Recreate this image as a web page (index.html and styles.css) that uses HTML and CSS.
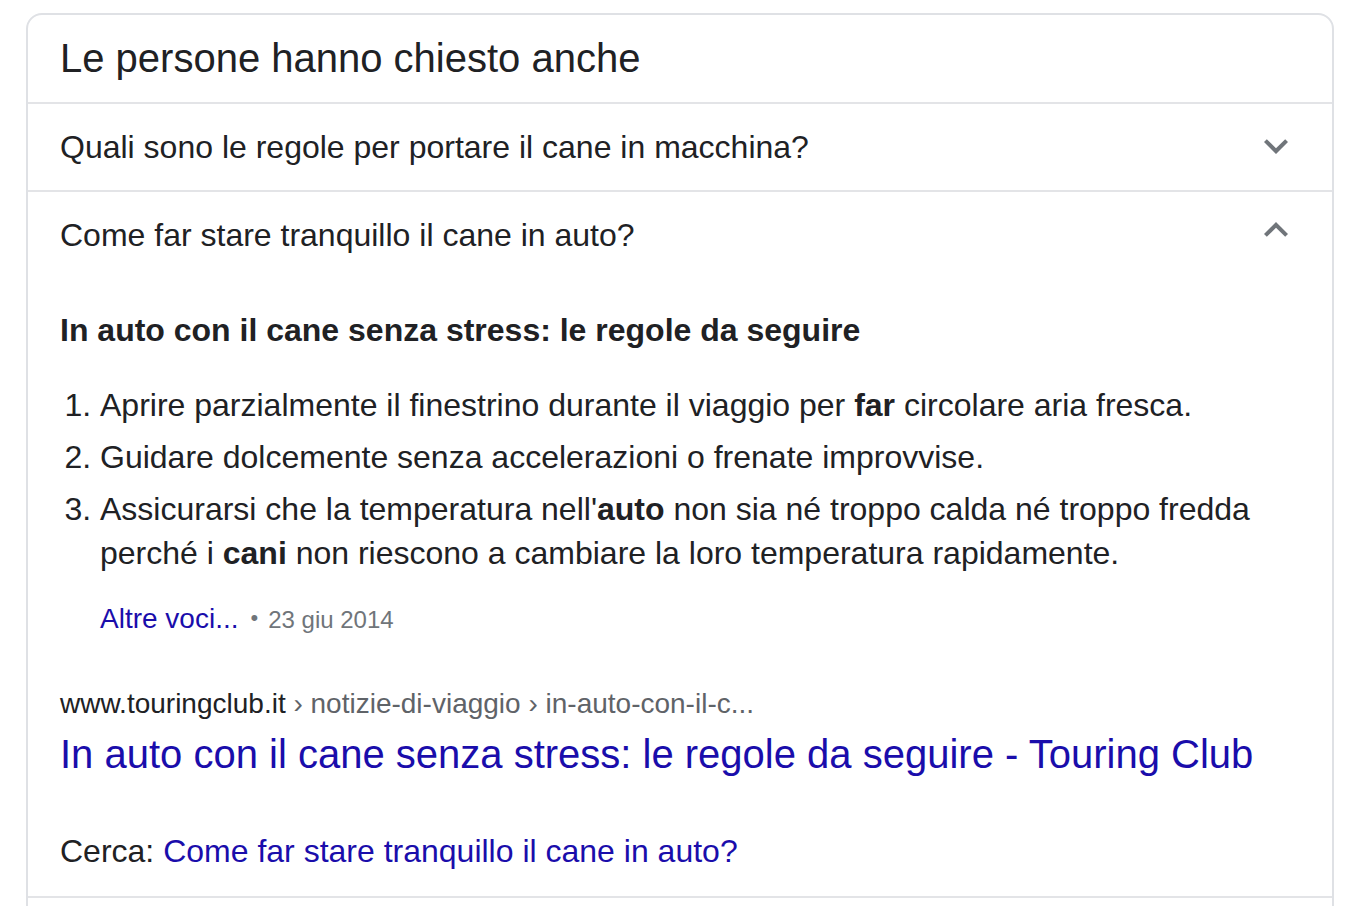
FILE: index.html
```html
<!DOCTYPE html>
<html lang="it">
<head>
<meta charset="utf-8">
<title>Le persone hanno chiesto anche</title>
<link rel="stylesheet" href="styles.css">
</head>
<body>
<div class="card">
  <div class="card-head">Le persone hanno chiesto anche</div>

  <div class="q-row">
    <div class="q-text">Quali sono le regole per portare il cane in macchina?</div>
    <svg class="chev chev-down" viewBox="0 0 24 24" width="48" height="48" aria-hidden="true"><path d="M16.59 8.59L12 13.17 7.41 8.59 6 10l6 6 6-6z"/></svg>
  </div>

  <div class="q-row q-open">
    <div class="q-main">
      <div class="q-text">Come far stare tranquillo il cane in auto?</div>
      <div class="answer">
        <div class="ans-title">In auto con il cane senza stress: le regole da seguire</div>
        <ol class="ans-list">
          <li>Aprire parzialmente il finestrino durante il viaggio per <b>far</b> circolare aria fresca.</li>
          <li>Guidare dolcemente senza accelerazioni o frenate improvvise.</li>
          <li>Assicurarsi che la temperatura nell'<b>auto</b> non sia né troppo calda né troppo fredda perché i <b>cani</b> non riescono a cambiare la loro temperatura rapidamente.</li>
        </ol>
        <div class="more"><a href="#" class="link">Altre voci...</a><span class="dot">•</span><span class="date">23 giu 2014</span></div>
        <div class="crumb"><span class="host">www.touringclub.it</span> › notizie-di-viaggio › in-auto-con-il-c...</div>
        <a href="#" class="link res-title">In auto con il cane senza stress: le regole da seguire - Touring Club</a>
        <div class="search">Cerca: <a href="#" class="link">Come far stare tranquillo il cane in auto?</a></div>
      </div>
    </div>
    <svg class="chev chev-up" viewBox="0 0 24 24" width="48" height="48" aria-hidden="true"><path d="M12 8l-6 6 1.41 1.41L12 10.83l4.59 4.58L18 14z"/></svg>
  </div>

  <div class="q-row q-next"></div>
</div>
</body>
</html>
```

FILE: styles.css
```css
* { box-sizing: border-box; }
html, body { margin: 0; padding: 0; background: #fff; }
body {
  font-family: "Liberation Sans", Arial, sans-serif;
  color: #202124;
  overflow: hidden;
  height: 906px;
}
.card {
  margin: 13px 0 0 26px;
  width: 1308px;
  border: 2px solid #dfe1e5;
  border-radius: 16px 16px 0 0;
  background: #fff;
}
.card-head {
  font-size: 40px;
  line-height: 52px;
  padding: 17px 32px 18px 32px;
  border-bottom: 2px solid #e3e4e7;
}
.q-row {
  display: flex;
  align-items: flex-start;
  justify-content: space-between;
  padding: 0 32px 0 32px;
  border-bottom: 2px solid #e3e4e7;
}
.q-text {
  font-size: 32px;
  line-height: 44px;
  padding: 21px 0 21px 0;
}
.chev { fill: #70757a; flex: none; }
.chev-down { margin-top: 18px; }
.chev-up { margin-top: 14px; }
.q-main { flex: 1; min-width: 0; }
.q-open .q-text { padding-bottom: 0; }
.answer { padding: 51px 0 23px 0; }
.ans-title {
  font-size: 32px;
  line-height: 44px;
  font-weight: bold;
}
.ans-list {
  margin: 31px 0 0 0;
  padding: 0 0 0 40px;
  font-size: 32px;
  line-height: 44px;
}
.ans-list li { margin-bottom: 8px; }
.ans-list li:last-child { margin-bottom: 0; }
.ans-list b { font-weight: bold; }
.link { color: #1a0dab; text-decoration: none; }
.more {
  margin-top: 24px;
  padding-left: 40px;
  font-size: 28px;
  line-height: 40px;
  color: #70757a;
}
.dot { font-size: 22px; margin: 0 10px 0 12px; position: relative; top: -3px; }
.date { font-size: 24px; }
.crumb {
  margin-top: 43px;
  font-size: 28px;
  line-height: 40px;
  color: #5f6368;
}
.crumb .host { color: #202124; }
.res-title {
  display: block;
  margin-top: 4px;
  font-size: 40px;
  line-height: 52px;
  white-space: nowrap;
}
.search {
  margin-top: 49px;
  font-size: 32px;
  line-height: 44px;
}
.q-next { height: 80px; border-bottom: none; }
```
